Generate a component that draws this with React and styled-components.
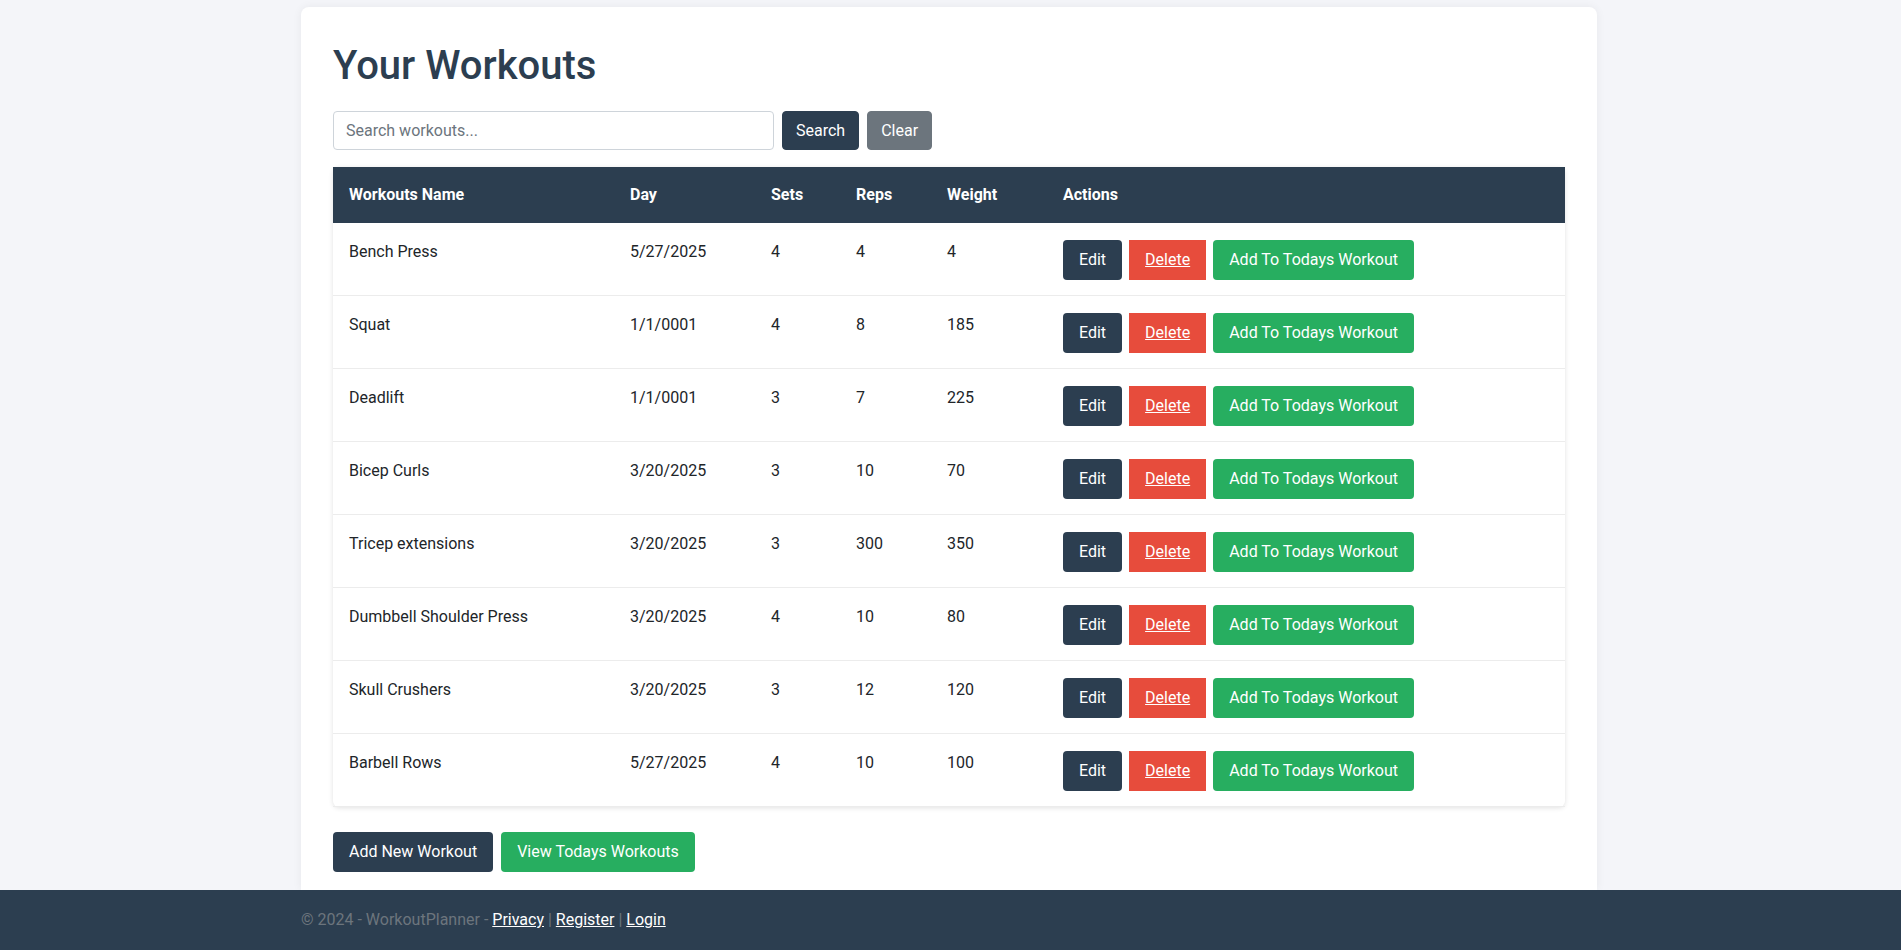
import React from 'react';
import styled, { createGlobalStyle, css } from 'styled-components';

const GlobalStyle = createGlobalStyle`
  *, *::before, *::after { box-sizing: border-box; }
  html, body { margin: 0; padding: 0; }
  body {
    background: #f4f5f9;
    font-family: Roboto, "Liberation Sans", Arial, sans-serif;
    font-size: 16px;
    line-height: 1.5;
    color: #212529;
  }
`;

const Page = styled.div`
  min-height: 100vh;
  display: flex;
  flex-direction: column;
`;

const Main = styled.main`
  flex: 1;
  display: flex;
  flex-direction: column;
  padding: 7px 3px 0 0;
`;

const Card = styled.section`
  flex: 1;
  width: 100%;
  max-width: 1296px;
  margin: 0 auto;
  background: #ffffff;
  border-radius: 8px 8px 0 0;
  box-shadow: 0 0 10px rgba(0, 0, 0, 0.06);
  padding: 32px 32px 18px;
`;

const Title = styled.h1`
  margin: 0 0 21px;
  padding-top: 3px;
  font-size: 40px;
  line-height: 48px;
  font-weight: 500;
  color: #2c3e50;
`;

const SearchForm = styled.form`
  display: flex;
  align-items: center;
  gap: 8px;
  margin-bottom: 17px;
`;

const SearchInput = styled.input`
  width: 441px;
  height: 39px;
  padding: 6px 12px;
  border: 1px solid #ced4da;
  border-radius: 4px;
  font: inherit;
  color: #212529;
  background: #fff;
  &::placeholder { color: #6c757d; }
`;

const variants = {
  dark: css`background: #2c3e50; border-color: #2c3e50;`,
  gray: css`background: #6c757d; border-color: #6c757d;`,
  red: css`background: #e74c3c; border-color: #e74c3c; border-radius: 0; text-decoration: underline;`,
  green: css`background: #27ae60; border-color: #27ae60;`,
};

const Button = styled.button`
  display: inline-flex;
  align-items: center;
  justify-content: center;
  font-family: inherit;
  font-size: 16px;
  line-height: 24px;
  font-weight: 400;
  color: #ffffff;
  border-radius: 4px;
  cursor: pointer;
  white-space: nowrap;
  ${({ $compact }) =>
    $compact
      ? css`height: 39px; padding: 6px 13px; border: 1px solid transparent;`
      : css`padding: 8px 16px; border: 0;`}
  ${({ $variant }) => variants[$variant]}
`;

const TableWrap = styled.div`
  background: #fff;
  border-radius: 6px;
  box-shadow: 0 1px 5px rgba(0, 0, 0, 0.12);
`;

const Table = styled.table`
  width: 100%;
  border-collapse: collapse;
`;

const Th = styled.th`
  width: ${({ $w }) => ($w ? `${$w}px` : 'auto')};
  padding: 16px;
  text-align: left;
  background: #2c3e50;
  color: #ffffff;
  font-weight: 700;
  line-height: 24px;
`;

const Tr = styled.tr`
  border-bottom: 1px solid #ececec;
`;

const Td = styled.td`
  padding: 17px 16px 15px;
  vertical-align: top;
  line-height: 24px;
  color: #212529;
`;

const Actions = styled.div`
  display: flex;
  gap: 7px;
`;

const BottomBar = styled.div`
  display: flex;
  gap: 8px;
  margin-top: 25px;
`;

const Footer = styled.footer`
  height: 60px;
  padding-right: 3px;
  background: #2c3e50;
  color: #6c757d;
  line-height: 60px;
  white-space: nowrap;
`;

const FooterInner = styled.div`
  max-width: 1296px;
  margin: 0 auto;
`;

const FooterLink = styled.a`
  color: #ffffff;
  text-decoration: underline;
`;

const workouts = [
  ['Bench Press', '5/27/2025', 4, 4, 4],
  ['Squat', '1/1/0001', 4, 8, 185],
  ['Deadlift', '1/1/0001', 3, 7, 225],
  ['Bicep Curls', '3/20/2025', 3, 10, 70],
  ['Tricep extensions', '3/20/2025', 3, 300, 350],
  ['Dumbbell Shoulder Press', '3/20/2025', 4, 10, 80],
  ['Skull Crushers', '3/20/2025', 3, 12, 120],
  ['Barbell Rows', '5/27/2025', 4, 10, 100],
];

export default function App() {
  return (
    <>
      <GlobalStyle />
      <Page>
        <Main>
          <Card>
            <Title>Your Workouts</Title>
            <SearchForm onSubmit={(e) => e.preventDefault()}>
              <SearchInput placeholder="Search workouts..." />
              <Button $compact $variant="dark" type="submit">Search</Button>
              <Button $compact $variant="gray" type="button">Clear</Button>
            </SearchForm>
            <TableWrap>
              <Table>
                <thead>
                  <tr>
                    <Th $w={281}>Workouts Name</Th>
                    <Th $w={141}>Day</Th>
                    <Th $w={85}>Sets</Th>
                    <Th $w={91}>Reps</Th>
                    <Th $w={116}>Weight</Th>
                    <Th>Actions</Th>
                  </tr>
                </thead>
                <tbody>
                  {workouts.map(([name, day, sets, reps, weight]) => (
                    <Tr key={name}>
                      <Td>{name}</Td>
                      <Td>{day}</Td>
                      <Td>{sets}</Td>
                      <Td>{reps}</Td>
                      <Td>{weight}</Td>
                      <Td>
                        <Actions>
                          <Button $variant="dark">Edit</Button>
                          <Button $variant="red">Delete</Button>
                          <Button $variant="green">Add To Todays Workout</Button>
                        </Actions>
                      </Td>
                    </Tr>
                  ))}
                </tbody>
              </Table>
            </TableWrap>
            <BottomBar>
              <Button $variant="dark">Add New Workout</Button>
              <Button $variant="green">View Todays Workouts</Button>
            </BottomBar>
          </Card>
        </Main>
        <Footer>
          <FooterInner>
            © 2024 - WorkoutPlanner - <FooterLink href="#">Privacy</FooterLink> | <FooterLink href="#">Register</FooterLink> | <FooterLink href="#">Login</FooterLink>
          </FooterInner>
        </Footer>
      </Page>
    </>
  );
}
